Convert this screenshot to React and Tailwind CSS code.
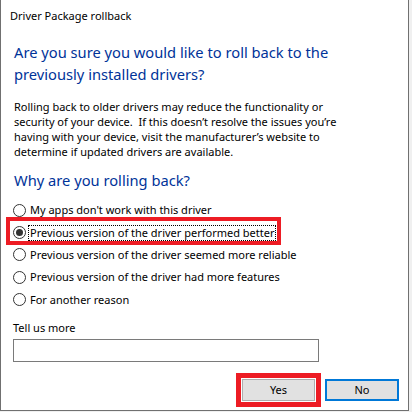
const OPTIONS = [
  "My apps don't work with this driver",
  'Previous version of the driver performed better',
  'Previous version of the driver seemed more reliable',
  'Previous version of the driver had more features',
  'For another reason',
]

function Radio({ checked }) {
  return (
    <span className="flex h-[13px] w-[13px] shrink-0 items-center justify-center rounded-full border border-[#333333] bg-white">
      {checked && <span className="h-[7px] w-[7px] rounded-full bg-[#333333]" />}
    </span>
  )
}

export default function App() {
  const selected = 1

  return (
    <div className="h-[412px] w-[412px] bg-[#f0f0f0] font-['Noto_Sans',sans-serif] text-[11px] text-black">
      <div className="flex h-[411px] w-[409px] flex-col border-b border-l border-r border-[#707070] bg-white">
        <div className="pl-[9px] pt-[8px] leading-[16px]">Driver Package rollback</div>

        <h1 className="pl-[13px] pt-[17px] text-[14.7px] leading-[22px] text-[#003399]">
          Are you sure you would like to roll back to the
          <br />
          previously installed drivers?
        </h1>

        <p className="whitespace-pre pl-[13px] pt-[14px] leading-[15px]">
          {'Rolling back to older drivers may reduce the functionality or\nsecurity of your device.  If this doesn’t resolve the issues you’re\nhaving with your device, visit the manufacturer’s website to\ndetermine if updated drivers are available.'}
        </p>

        <h2 className="pl-[13px] pt-[10px] text-[14.7px] leading-[22px] text-[#003399]">Why are you rolling back?</h2>

        <div className="flex flex-col pl-[12px] pt-[8px]">
          {OPTIONS.map((label, i) => (
            <div key={label} className="relative flex h-[22.4px] items-center gap-[2px]">
              <Radio checked={i === selected} />
              {i === selected ? (
                <span className="border border-dotted border-black px-px leading-[14px]">{label}</span>
              ) : (
                <span className="pl-[2px] leading-[16px]">{label}</span>
              )}
              {i === selected && (
                <span className="pointer-events-none absolute -top-[4px] left-[-7px] h-[28px] w-[275px] border-4 border-[#ed1c24]" />
              )}
            </div>
          ))}
        </div>

        <div className="pl-[12px] pt-[9px] leading-[16px]">Tell us more</div>
        <div className="ml-[12px] mt-[3px] h-[23px] w-[306px] border border-[#7a7a7a] bg-white" />

        <div className="flex justify-end gap-[10px] pr-[9px] pt-[17px]">
          <div className="relative">
            <button className="h-[22px] w-[73px] border border-[#adadad] bg-[#e1e1e1] leading-[18px]">Yes</button>
            <span className="pointer-events-none absolute -inset-[6px] border-[5px] border-[#ed1c24]" />
          </div>
          <button className="h-[22px] w-[74px] border-2 border-[#0078d7] bg-[#e1e1e1] leading-[16px]">No</button>
        </div>
      </div>
    </div>
  )
}
